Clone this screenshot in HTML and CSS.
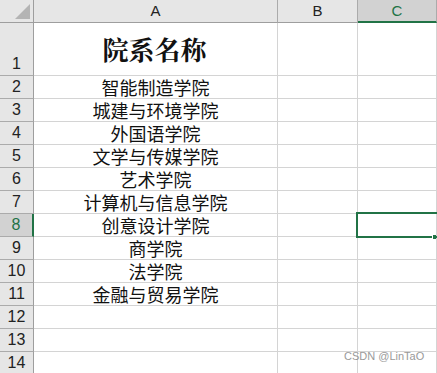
FILE: index.html
```html
<!DOCTYPE html>
<html lang="zh">
<head>
<meta charset="UTF-8">
<title>院系名称</title>
<link rel="stylesheet" href="styles.css">
</head>
<body>

<div class="sheet">
    <!-- 表头 -->
    <div class="corner"><span class="tri"></span></div>
    <div class="colhead">A</div>
    <div class="colhead">B</div>
    <div class="colhead sel">C</div>

    <div class="rowhead tall">1</div>
    <div class="cell title">院系名称</div>
    <div class="cell"></div>
    <div class="cell"></div>

    <div class="rowhead">2</div><div class="cell">智能制造学院</div><div class="cell"></div><div class="cell"></div>
    <div class="rowhead">3</div><div class="cell">城建与环境学院</div><div class="cell"></div><div class="cell"></div>
    <div class="rowhead">4</div><div class="cell">外国语学院</div><div class="cell"></div><div class="cell"></div>
    <div class="rowhead">5</div><div class="cell">文学与传媒学院</div><div class="cell"></div><div class="cell"></div>
    <div class="rowhead">6</div><div class="cell">艺术学院</div><div class="cell"></div><div class="cell"></div>
    <div class="rowhead">7</div><div class="cell">计算机与信息学院</div><div class="cell"></div><div class="cell"></div>
    <div class="rowhead sel">8</div><div class="cell">创意设计学院</div><div class="cell"></div><div class="cell active"><span class="box"></span><span class="handle"></span></div>
    <div class="rowhead">9</div><div class="cell">商学院</div><div class="cell"></div><div class="cell"></div>
    <div class="rowhead">10</div><div class="cell">法学院</div><div class="cell"></div><div class="cell"></div>
    <div class="rowhead">11</div><div class="cell">金融与贸易学院</div><div class="cell"></div><div class="cell"></div>
    <div class="rowhead">12</div><div class="cell"></div><div class="cell"></div><div class="cell"></div>
    <div class="rowhead">13</div><div class="cell"></div><div class="cell"></div><div class="cell"></div>
    <div class="rowhead">14</div><div class="cell"></div><div class="cell"></div><div class="cell"></div>
</div>

<div class="mark">CSDN @LinTaO</div>

</body>
</html>
```

FILE: styles.css
```css
body {
    margin: 0;
    background: #fff;
    font-family: "Noto Sans CJK SC", sans-serif;
    overflow: hidden;
}
.sheet {
    display: grid;
    grid-template-columns: 34px 244px 80px 1fr;
    grid-template-rows: 23px 53px repeat(13, 23px);
}
.sheet > div {
    box-sizing: border-box;
    border-right: 1px solid #d4d4d4;
    border-bottom: 1px solid #d4d4d4;
}
.corner {
    background: #e6e6e6;
    position: relative;
    border-right-color: #9e9e9e !important;
    border-bottom-color: #9e9e9e !important;
}
.tri {
    position: absolute;
    right: 3px;
    bottom: 3px;
    width: 0;
    height: 0;
    border-left: 15px solid transparent;
    border-bottom: 15px solid #b4b4b4;
}
.colhead {
    background: #e6e6e6;
    border-right-color: #ababab !important;
    border-bottom-color: #9e9e9e !important;
    font-family: "Liberation Sans", sans-serif;
    font-size: 15px;
    color: #222;
    text-align: center;
    line-height: 22px;
}
.colhead.sel {
    background: #d2d2d2;
    color: #217346;
    border-bottom: 2px solid #217346 !important;
    line-height: 21px;
}
.rowhead {
    background: #e6e6e6;
    border-right-color: #9e9e9e !important;
    border-bottom-color: #ababab !important;
    font-family: "Liberation Sans", sans-serif;
    font-size: 16px;
    color: #222;
    text-align: center;
    display: flex;
    align-items: flex-end;
    justify-content: center;
    line-height: 22px;
}
.rowhead.sel {
    background: #d2d2d2;
    color: #217346;
    border-right: 2px solid #217346 !important;
}
.cell {
    font-size: 18px;
    color: #111;
    text-align: center;
    line-height: 22px;
    white-space: nowrap;
}
.title {
    font-family: "Noto Serif CJK SC", "Noto Sans CJK SC", serif;
    font-weight: bold;
    font-size: 26px;
    line-height: 52px;
    padding-right: 2px;
}
.active { position: relative; }
.box {
    position: absolute;
    left: -2px;
    top: -2px;
    right: -3px;
    bottom: -2px;
    border: 2px solid #217346;
}
.handle {
    position: absolute;
    right: 0;
    bottom: -3px;
    width: 3px;
    height: 4px;
    background: #217346;
    border-left: 1px solid #fff;
    border-top: 1px solid #fff;
}
.mark {
    position: absolute;
    left: 344px;
    top: 350px;
    font-family: "Liberation Sans", sans-serif;
    font-size: 11px;
    color: #9a9a9a;
}
```
